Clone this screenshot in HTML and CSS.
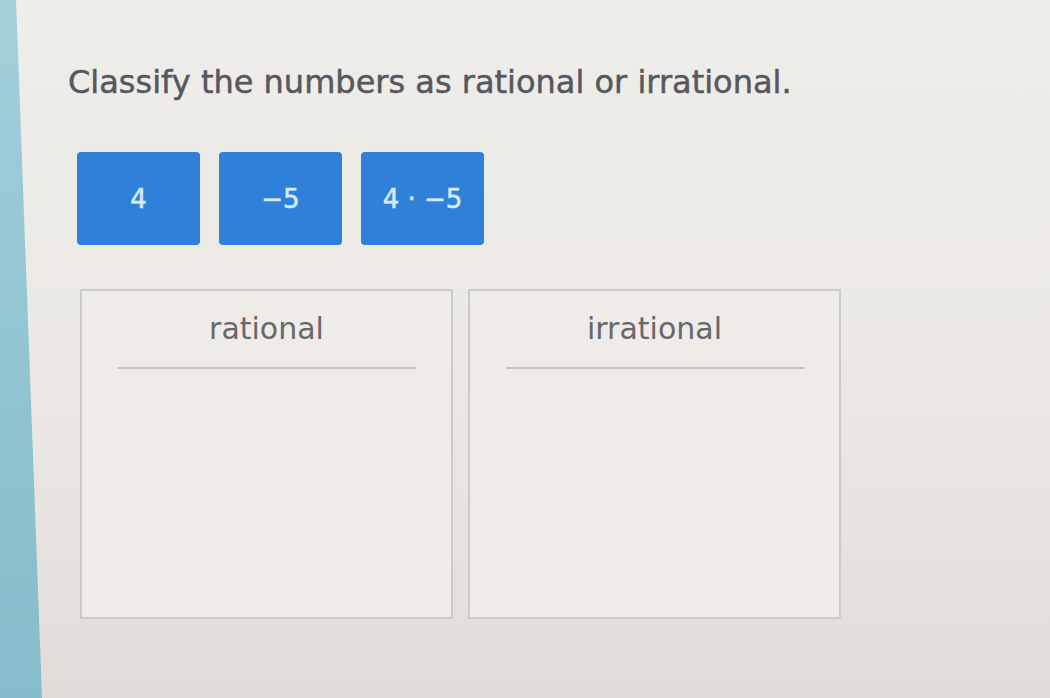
FILE: index.html
```html
<!DOCTYPE html>
<html lang="en">

<head>
    <meta charset="UTF-8">
    <meta name="viewport" content="width=device-width, initial-scale=1.0">
    <title>Classify numbers</title>
    <link rel="stylesheet" href="styles.css">
</head>

<body>
    <div class="page">
        <div class="side-strip"></div>
        <div class="main">
            <h1 class="question">Classify the numbers as rational or irrational.</h1>

            <div class="chips">
                <div class="chip">4</div>
                <div class="chip">&minus;5</div>
                <div class="chip">4 &middot; &minus;5</div>
            </div>

            <div class="bins">
                <div class="bin">
                    <div class="bin-title">rational</div>
                    <div class="bin-rule"></div>
                    <div class="bin-body"></div>
                </div>
                <div class="bin">
                    <div class="bin-title">irrational</div>
                    <div class="bin-rule"></div>
                    <div class="bin-body"></div>
                </div>
            </div>
        </div>
    </div>
</body>

</html>
```

FILE: styles.css
```css
html,
body {
    margin: 0;
    height: 100%;
}

body {
    font-family: "DejaVu Sans", Verdana, sans-serif;
    /* 照片里的屏幕底色，上亮下暗 */
    background: linear-gradient(180deg, #eeedea 0%, #ebe8e4 55%, #e1dcd7 100%);
    overflow: hidden;
}

.page {
    display: flex;
    height: 100%;
}

/* 左边那条蓝绿色的边，越往下越宽 */
.side-strip {
    width: 42px;
    flex-shrink: 0;
    background: linear-gradient(180deg, #a3cfda 0%, #8ec3d1 60%, #86bccb 100%);
    clip-path: polygon(0 0, 16px 0, 42px 100%, 0 100%);
}

.main {
    flex: 1;
    padding-left: 26px;
}

.question {
    margin: 62px 0 0 0;
    font-size: 32px;
    font-weight: normal;
    line-height: 40px;
    color: #57585d;
    -webkit-text-stroke: 0.5px #57585d;
}

.chips {
    display: flex;
    gap: 19px;
    margin-top: 50px;
    padding-left: 9px;
}

.chip {
    width: 123px;
    height: 93px;
    border-radius: 4px;
    background-color: #2e80d8;
    color: #d6e7f8;
    font-size: 26px;
    -webkit-text-stroke: 0.6px #d6e7f8;
    display: flex;
    align-items: center;
    justify-content: center;
}

.bins {
    display: flex;
    gap: 15px;
    margin-top: 44px;
    padding-left: 12px;
}

.bin {
    width: 369px;
    height: 326px;
    border: 2px solid #c9cccd;
    background-color: #efebe7;
    display: flex;
    flex-direction: column;
    align-items: center;
}

.bin-title {
    margin-top: 20px;
    font-size: 30px;
    line-height: 36px;
    color: #66686b;
}

.bin-rule {
    width: 298px;
    height: 2px;
    margin-top: 20px;
    background-color: #bcc5c4;
}

.bin-body {
    flex: 1;
}
```
